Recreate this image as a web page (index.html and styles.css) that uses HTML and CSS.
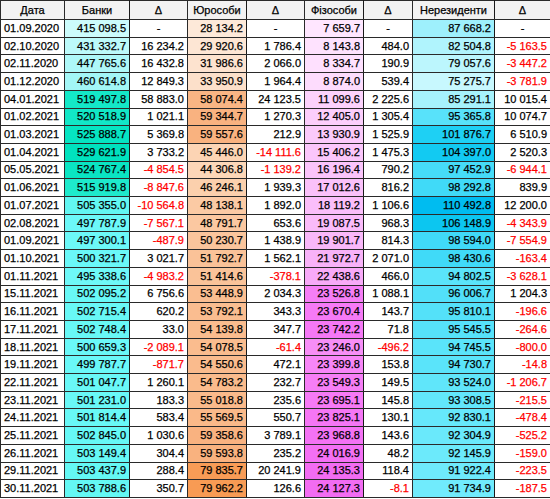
FILE: index.html
```html
<!DOCTYPE html>
<html lang="uk">
<head>
<meta charset="utf-8">
<title>Депозити</title>
<link rel="stylesheet" href="styles.css">
</head>
<body>
<table class="grid">
<colgroup>
<col class="w-date"><col class="w-bank"><col class="w-d1"><col class="w-jur"><col class="w-d2"><col class="w-fiz"><col class="w-d3"><col class="w-nr"><col class="w-d4">
</colgroup>
<thead>
<tr><th>Дата</th><th class="sc">Банки</th><th>Δ</th><th class="sc">Юрособи</th><th>Δ</th><th class="sc">Фізособи</th><th>Δ</th><th class="sc">Нерезиденти</th><th>Δ</th></tr>
</thead>
<tbody>
<tr><td class="date">01.09.2020</td><td class="num sc" style="background:#ccfcfc">415 098.5</td><td class="dash">-</td><td class="num sc" style="background:#fde9d9">28 134.2</td><td class="dash">-</td><td class="num sc" style="background:#ffe6ff">7 659.7</td><td class="dash">-</td><td class="num sc" style="background:#9ef0fc">87 668.2</td><td class="dash">-</td></tr>
<tr><td class="date">02.10.2020</td><td class="num sc" style="background:#bcfafa">431 332.7</td><td class="num">16 234.2</td><td class="num sc" style="background:#fde6d4">29 920.6</td><td class="num">1 786.4</td><td class="num sc" style="background:#fee2fe">8 143.8</td><td class="num">484.0</td><td class="num sc" style="background:#b0f4fd">82 504.8</td><td class="num neg">-5 163.5</td></tr>
<tr><td class="date">02.11.2020</td><td class="num sc" style="background:#aef8f8">447 765.6</td><td class="num">16 432.8</td><td class="num sc" style="background:#fde3cf">31 986.6</td><td class="num">2 066.0</td><td class="num sc" style="background:#fee0fe">8 334.7</td><td class="num">190.9</td><td class="num sc" style="background:#bcf6fd">79 057.6</td><td class="num neg">-3 447.2</td></tr>
<tr><td class="date">01.12.2020</td><td class="num sc" style="background:#a2f6f6">460 614.8</td><td class="num">12 849.3</td><td class="num sc" style="background:#fce0ca">33 950.9</td><td class="num">1 964.4</td><td class="num sc" style="background:#fddcfd">8 874.0</td><td class="num">539.4</td><td class="num sc" style="background:#c8f8fe">75 275.7</td><td class="num neg">-3 781.9</td></tr>
<tr><td class="date">04.01.2021</td><td class="num sc" style="background:#14e8c8">519 497.8</td><td class="num">58 883.0</td><td class="num sc" style="background:#f9b584">58 074.4</td><td class="num">24 123.5</td><td class="num sc" style="background:#fcd2fc">11 099.6</td><td class="num">2 225.6</td><td class="num sc" style="background:#a6f2fc">85 291.1</td><td class="num">10 015.4</td></tr>
<tr><td class="date">01.02.2021</td><td class="num sc" style="background:#12e7c7">520 518.9</td><td class="num">1 021.1</td><td class="num sc" style="background:#f9b280">59 344.7</td><td class="num">1 270.3</td><td class="num sc" style="background:#fccefc">12 405.0</td><td class="num">1 305.4</td><td class="num sc" style="background:#58e2fa">95 365.8</td><td class="num">10 074.7</td></tr>
<tr><td class="date">01.03.2021</td><td class="num sc" style="background:#06e4c2">525 888.7</td><td class="num">5 369.8</td><td class="num sc" style="background:#f9b27f">59 557.6</td><td class="num">212.9</td><td class="num sc" style="background:#fbcafb">13 930.9</td><td class="num">1 525.9</td><td class="num sc" style="background:#1ed0f4">101 876.7</td><td class="num">6 510.9</td></tr>
<tr><td class="date">01.04.2021</td><td class="num sc" style="background:#00e2be">529 621.9</td><td class="num">3 733.2</td><td class="num sc" style="background:#fcd4b4">45 446.0</td><td class="num neg">-14 111.6</td><td class="num sc" style="background:#fbc6fb">15 406.2</td><td class="num">1 475.3</td><td class="num sc" style="background:#12caf2">104 397.0</td><td class="num">2 520.3</td></tr>
<tr><td class="date">05.05.2021</td><td class="num sc" style="background:#0ae5c3">524 767.4</td><td class="num neg">-4 854.5</td><td class="num sc" style="background:#fcd7b8">44 306.8</td><td class="num neg">-1 139.2</td><td class="num sc" style="background:#fbc4fb">16 196.4</td><td class="num">790.2</td><td class="num sc" style="background:#46dcf8">97 452.9</td><td class="num neg">-6 944.1</td></tr>
<tr><td class="date">01.06.2021</td><td class="num sc" style="background:#1eeacc">515 919.8</td><td class="num neg">-8 847.6</td><td class="num sc" style="background:#fbd0ad">46 246.1</td><td class="num">1 939.3</td><td class="num sc" style="background:#fac1fa">17 012.6</td><td class="num">816.2</td><td class="num sc" style="background:#40daf8">98 292.8</td><td class="num">839.9</td></tr>
<tr><td class="date">01.07.2021</td><td class="num sc" style="background:#62f6f2">505 355.0</td><td class="num neg">-10 564.8</td><td class="num sc" style="background:#fbcaa4">48 138.1</td><td class="num">1 892.0</td><td class="num sc" style="background:#fabefa">18 119.2</td><td class="num">1 106.6</td><td class="num sc" style="background:#00bcf0">110 492.8</td><td class="num">12 200.0</td></tr>
<tr><td class="date">02.08.2021</td><td class="num sc" style="background:#6cf8f8">497 787.9</td><td class="num neg">-7 567.1</td><td class="num sc" style="background:#fbc8a1">48 791.7</td><td class="num">653.6</td><td class="num sc" style="background:#fabbfa">19 087.5</td><td class="num">968.3</td><td class="num sc" style="background:#0cc6f0">106 148.9</td><td class="num neg">-4 343.9</td></tr>
<tr><td class="date">01.09.2021</td><td class="num sc" style="background:#6cf8f8">497 300.1</td><td class="num neg">-487.9</td><td class="num sc" style="background:#fac59c">50 230.7</td><td class="num">1 438.9</td><td class="num sc" style="background:#f9b8f9">19 901.7</td><td class="num">814.3</td><td class="num sc" style="background:#40daf8">98 594.0</td><td class="num neg">-7 554.9</td></tr>
<tr><td class="date">01.10.2021</td><td class="num sc" style="background:#6af8f8">500 321.7</td><td class="num">3 021.7</td><td class="num sc" style="background:#fac298">51 792.7</td><td class="num">1 562.1</td><td class="num sc" style="background:#f8b2f8">21 972.7</td><td class="num">2 071.0</td><td class="num sc" style="background:#40daf8">98 430.6</td><td class="num neg">-163.4</td></tr>
<tr><td class="date">01.11.2021</td><td class="num sc" style="background:#6ef8f8">495 338.6</td><td class="num neg">-4 983.2</td><td class="num sc" style="background:#fac399">51 414.6</td><td class="num neg">-378.1</td><td class="num sc" style="background:#f8aaf8">22 438.6</td><td class="num">466.0</td><td class="num sc" style="background:#5ae4fa">94 802.5</td><td class="num neg">-3 628.1</td></tr>
<tr><td class="date">15.11.2021</td><td class="num sc" style="background:#68f8f6">502 095.2</td><td class="num">6 756.6</td><td class="num sc" style="background:#fabe91">53 448.9</td><td class="num">2 034.3</td><td class="num sc" style="background:#f67ef6">23 526.8</td><td class="num">1 088.1</td><td class="num sc" style="background:#52e0f9">96 006.7</td><td class="num">1 204.3</td></tr>
<tr><td class="date">16.11.2021</td><td class="num sc" style="background:#68f8f6">502 715.4</td><td class="num">620.2</td><td class="num sc" style="background:#fabd90">53 792.1</td><td class="num">343.3</td><td class="num sc" style="background:#f67af6">23 670.4</td><td class="num">143.7</td><td class="num sc" style="background:#54e1f9">95 810.1</td><td class="num neg">-196.6</td></tr>
<tr><td class="date">17.11.2021</td><td class="num sc" style="background:#68f8f6">502 748.4</td><td class="num">33.0</td><td class="num sc" style="background:#fabc8e">54 139.8</td><td class="num">347.7</td><td class="num sc" style="background:#f578f5">23 742.2</td><td class="num">71.8</td><td class="num sc" style="background:#56e2fa">95 545.5</td><td class="num neg">-264.6</td></tr>
<tr><td class="date">18.11.2021</td><td class="num sc" style="background:#6af8f8">500 659.3</td><td class="num neg">-2 089.1</td><td class="num sc" style="background:#fabc8e">54 078.5</td><td class="num neg">-61.4</td><td class="num sc" style="background:#f78ef7">23 246.0</td><td class="num neg">-496.2</td><td class="num sc" style="background:#5ae4fa">94 745.5</td><td class="num neg">-800.0</td></tr>
<tr><td class="date">19.11.2021</td><td class="num sc" style="background:#6af8f8">499 787.7</td><td class="num neg">-871.7</td><td class="num sc" style="background:#fabb8d">54 550.6</td><td class="num">472.1</td><td class="num sc" style="background:#f786f7">23 399.8</td><td class="num">153.8</td><td class="num sc" style="background:#5ae4fa">94 730.7</td><td class="num neg">-14.8</td></tr>
<tr><td class="date">22.11.2021</td><td class="num sc" style="background:#69f8f7">501 047.7</td><td class="num">1 260.1</td><td class="num sc" style="background:#fabb8c">54 783.2</td><td class="num">232.7</td><td class="num sc" style="background:#f67ef6">23 549.3</td><td class="num">149.5</td><td class="num sc" style="background:#60e6fa">93 524.0</td><td class="num neg">-1 206.7</td></tr>
<tr><td class="date">23.11.2021</td><td class="num sc" style="background:#69f8f7">501 231.0</td><td class="num">183.3</td><td class="num sc" style="background:#faba8b">55 018.8</td><td class="num">235.6</td><td class="num sc" style="background:#f67af6">23 695.1</td><td class="num">145.8</td><td class="num sc" style="background:#62e7fb">93 308.5</td><td class="num neg">-215.5</td></tr>
<tr><td class="date">24.11.2021</td><td class="num sc" style="background:#68f8f6">501 814.4</td><td class="num">583.4</td><td class="num sc" style="background:#fab989">55 569.5</td><td class="num">550.7</td><td class="num sc" style="background:#f576f5">23 825.1</td><td class="num">130.1</td><td class="num sc" style="background:#66e8fb">92 830.1</td><td class="num neg">-478.4</td></tr>
<tr><td class="date">25.11.2021</td><td class="num sc" style="background:#66f8f6">502 845.0</td><td class="num">1 030.6</td><td class="num sc" style="background:#f9b280">59 358.6</td><td class="num">3 789.1</td><td class="num sc" style="background:#f472f4">23 968.8</td><td class="num">143.6</td><td class="num sc" style="background:#6ae9fb">92 304.9</td><td class="num neg">-525.2</td></tr>
<tr><td class="date">26.11.2021</td><td class="num sc" style="background:#66f8f5">503 149.4</td><td class="num">304.4</td><td class="num sc" style="background:#f9b27f">59 593.8</td><td class="num">235.2</td><td class="num sc" style="background:#f470f4">24 016.9</td><td class="num">48.2</td><td class="num sc" style="background:#6ceafb">92 145.9</td><td class="num neg">-159.0</td></tr>
<tr><td class="date">29.11.2021</td><td class="num sc" style="background:#64f8f4">503 437.9</td><td class="num">288.4</td><td class="num sc" style="background:#f89c56">79 835.7</td><td class="num">20 241.9</td><td class="num sc" style="background:#f26cf2">24 135.3</td><td class="num">118.4</td><td class="num sc" style="background:#6eeafb">91 922.4</td><td class="num neg">-223.5</td></tr>
<tr><td class="date">30.11.2021</td><td class="num sc" style="background:#64f8f4">503 788.6</td><td class="num">350.7</td><td class="num sc" style="background:#f89b54">79 962.2</td><td class="num">126.6</td><td class="num sc" style="background:#f26cf2">24 127.3</td><td class="num neg">-8.1</td><td class="num sc" style="background:#70ebfc">91 734.9</td><td class="num neg">-187.5</td></tr>
</tbody>
</table>
</body>
</html>
```

FILE: styles.css
```css
html, body {
  margin: 0;
  padding: 0;
  background: #ffffff;
}

body {
  font-family: "Liberation Sans", Arial, sans-serif;
  font-size: 11px;
  color: #000000;
}

.grid {
  border-collapse: collapse;
  table-layout: fixed;
  width: 550px;
}

.w-date { width: 64px; }
.w-bank { width: 65px; }
.w-d1 { width: 58px; }
.w-jur { width: 59px; }
.w-d2 { width: 58px; }
.w-fiz { width: 59px; }
.w-d3 { width: 49px; }
.w-nr { width: 82px; }
.w-d4 { width: 56px; }

.grid th,
.grid td {
  border: 1px solid #2a2a2a;
  padding: 0 3px;
  white-space: nowrap;
  overflow: hidden;
  line-height: 13px;
  -webkit-text-stroke: 0.25px currentColor;
}

.grid thead tr {
  height: 19px;
}

.grid tbody tr {
  height: 17.71px;
}

.grid th {
  background: #f2f2f2;
  font-weight: normal;
  text-align: center;
}

.grid .sc {
  border-left-color: #1a1a1a;
  border-right-color: #1a1a1a;
}

.date {
  text-align: left;
}

.num {
  text-align: right;
}

.dash {
  text-align: center;
}

.neg {
  color: #ff0000;
}
```
